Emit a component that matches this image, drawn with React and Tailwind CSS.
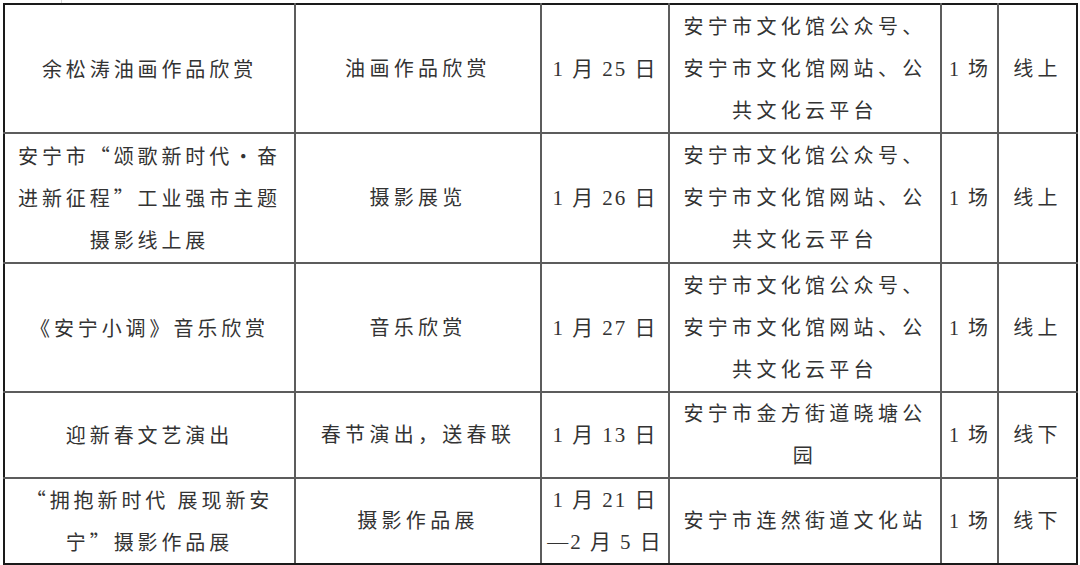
const rows = [
  {
    h: 'h-[129px]',
    name: ['余松涛油画作品欣赏'],
    type: '油画作品欣赏',
    date: ['1 月 25 日'],
    place: ['安宁市文化馆公众号、', '安宁市文化馆网站、公', '共文化云平台'],
    count: '1 场',
    mode: '线上',
  },
  {
    h: 'h-[130px]',
    name: ['安宁市“颂歌新时代•奋', '进新征程”工业强市主题', '摄影线上展'],
    type: '摄影展览',
    date: ['1 月 26 日'],
    place: ['安宁市文化馆公众号、', '安宁市文化馆网站、公', '共文化云平台'],
    count: '1 场',
    mode: '线上',
  },
  {
    h: 'h-[129px]',
    name: ['《安宁小调》音乐欣赏'],
    type: '音乐欣赏',
    date: ['1 月 27 日'],
    place: ['安宁市文化馆公众号、', '安宁市文化馆网站、公', '共文化云平台'],
    count: '1 场',
    mode: '线上',
  },
  {
    h: 'h-[86px]',
    name: ['迎新春文艺演出'],
    type: '春节演出，送春联',
    date: ['1 月 13 日'],
    place: ['安宁市金方街道晓塘公', '园'],
    count: '1 场',
    mode: '线下',
  },
  {
    h: 'h-[85px]',
    name: ['“拥抱新时代 展现新安', '宁”摄影作品展'],
    type: '摄影作品展',
    date: ['1 月 21 日', '—2 月 5 日'],
    place: ['安宁市连然街道文化站'],
    count: '1 场',
    mode: '线下',
  },
]

function Lines({ lines }) {
  return lines.map((l, i) => (
    <div key={i} className="whitespace-nowrap">
      {l}
    </div>
  ))
}

const cell =
  'border-2 border-[#5c5c5c] p-0 text-center align-middle first:border-l-[#1a1a1a] last:border-r-[#1a1a1a]'

const cjk = { fontFamily: '"Noto Sans CJK SC", sans-serif' }

export default function App() {
  return (
    <div
      className="h-[565px] w-[1080px] overflow-hidden bg-white text-[20px] leading-[42px] tracking-[4.3px] text-[#333]"
      style={{ fontFamily: '"Liberation Serif", "Noto Sans CJK SC", serif' }}
    >
      <div className="ml-[61px] h-[3px] w-px bg-[#d8d8d8]" />
      <table className="ml-[3px] w-[1073px] table-fixed border-collapse">
        <colgroup>
          <col className="w-[291px]" />
          <col className="w-[246px]" />
          <col className="w-[128px]" />
          <col className="w-[272px]" />
          <col className="w-[57px]" />
          <col className="w-[79px]" />
        </colgroup>
        <tbody>
          {rows.map((r, i) => (
            <tr
              key={i}
              className={`${r.h} [&:first-child>td]:border-t-[#1a1a1a] [&:last-child>td]:border-b-[#1a1a1a]`}
            >
              <td className={`${cell} tracking-[3.9px]`} style={cjk}>
                <Lines lines={r.name} />
              </td>
              <td className={cell}>{r.type}</td>
              <td className={`${cell} tracking-[2px] text-[21px]`}>
                <Lines lines={r.date} />
              </td>
              <td className={cell}>
                <Lines lines={r.place} />
              </td>
              <td className={`${cell} tracking-[2px]`}>{r.count}</td>
              <td className={cell}>{r.mode}</td>
            </tr>
          ))}
        </tbody>
      </table>
    </div>
  )
}
